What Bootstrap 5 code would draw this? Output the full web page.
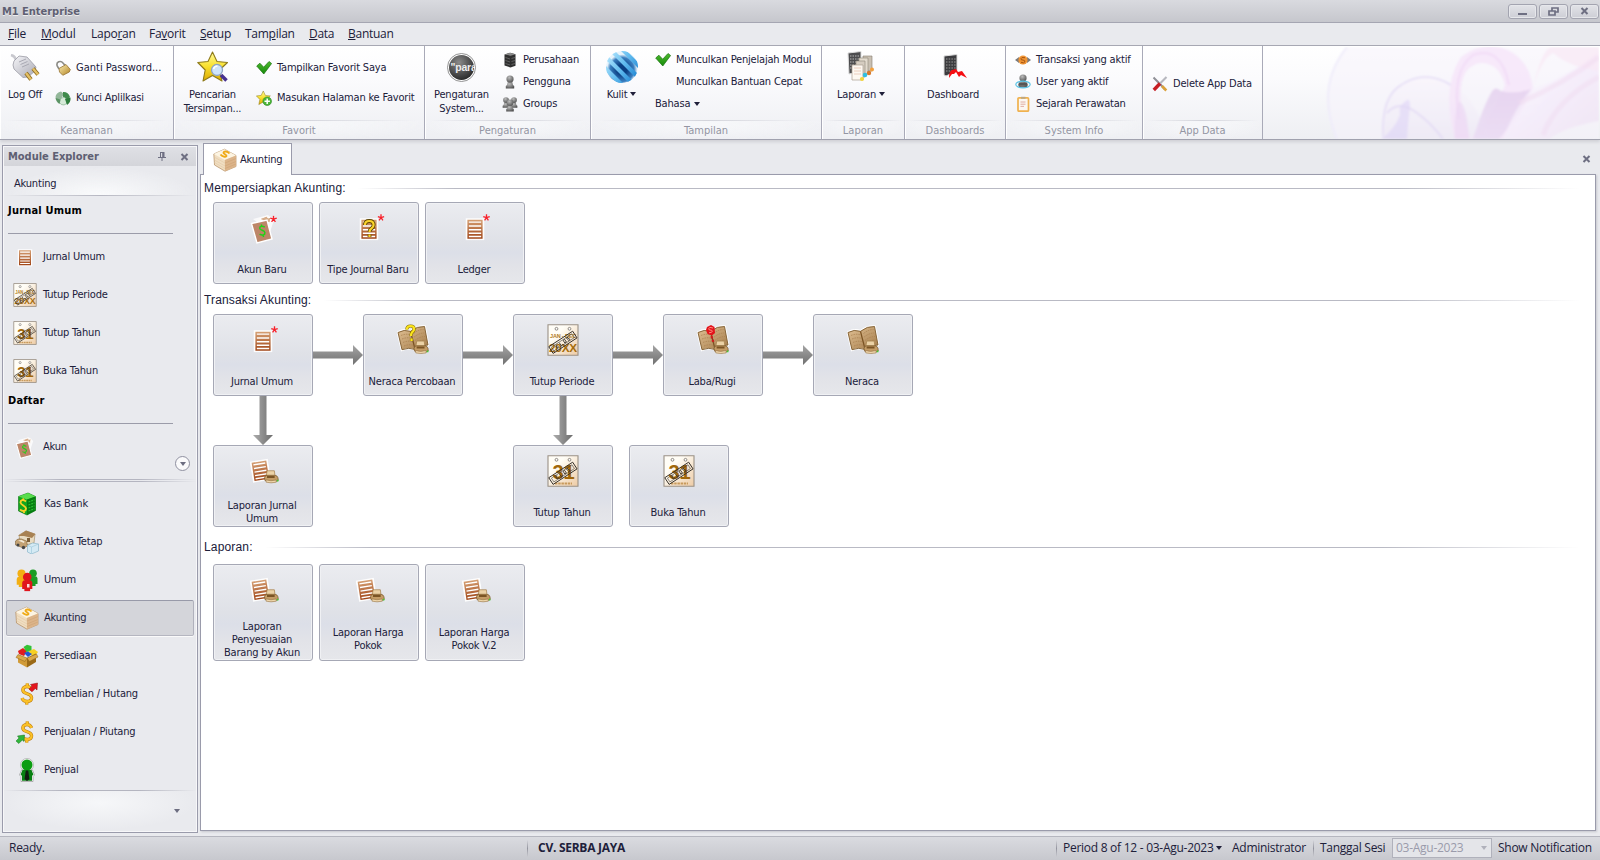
<!DOCTYPE html>
<html lang="id">
<head>
<meta charset="utf-8">
<meta name="viewport" content="width=device-width, initial-scale=1">
<title>M1 Enterprise</title>
<link href="https://cdn.jsdelivr.net/npm/bootstrap@5.3.0/dist/css/bootstrap.min.css" rel="stylesheet">
<style>
body{font-family:"DejaVu Sans Condensed","DejaVu Sans",sans-serif;font-size:11px;line-height:14px;letter-spacing:-.19px;color:#20203a;background:#e9eaee;height:860px;overflow:hidden}
svg{display:block;flex:none}
.segoe{font-family:"Open Sans","Noto Sans",sans-serif;font-size:12px;letter-spacing:-.27px}
/* window frame */
.titlebar{height:23px;padding:0 1px 0 2px;background:linear-gradient(#d9dadf,#c6c7cd);border-bottom:1px solid #a5a6b2}
.titlebar b{font-size:11px;color:#5e5f72;letter-spacing:-.03px;text-shadow:0 1px 0 #eee;padding-top:1px}
.winbtns{gap:2px}
.winbtn{width:29px;height:15px;border:1px solid #a3a4b0;border-radius:3px;background:linear-gradient(#e2e3e8,#cdced5);box-shadow:inset 0 0 0 1px #e6e7eb}
.menubar{height:23px;border-bottom:1px solid #a5a6b2}
.menubar span{flex:none;white-space:nowrap}
/* ribbon */
.ribbon{height:94px;background:linear-gradient(#fff,#fbfbfd 35%,#eeeff3);border-bottom:1px solid #a0a1ae;box-shadow:0 2px 3px #cfd0d6;position:relative}
.rgroup{border-right:1px solid #a9aab8;position:relative;height:93px;flex:none;box-shadow:inset 1px 0 #fff}
.rbody{height:74px}
.rcap{height:19px;line-height:19px;text-align:center;color:#9395a3;letter-spacing:0;border-top:1px solid;border-image:linear-gradient(90deg,transparent 4%,#d3d4db 50%,transparent 96%) 1;background:radial-gradient(ellipse at 50% 20%,#f7f8fa,transparent 75%)}
.rbig{text-align:center;white-space:nowrap;padding-top:5px;flex:none}
.rbig svg{margin:0 auto 5px}
.rbig .caret{margin-left:0}
.rlist{flex:none}
.rlist>div{height:22px;display:flex;align-items:center;white-space:nowrap}
.rlist svg{margin-right:5px}
.rlist.two{padding-top:7px}
.rlist.two>div{height:30px}
.rlist.three{padding-top:3px}
.smoke{position:absolute;right:1px;top:1px}
.caret{display:inline-block;border:3.5px solid transparent;border-top:4px solid #20203a;border-bottom:0;margin-left:4px;vertical-align:2px}
/* module explorer */
.explorer{width:196px;height:688px;margin:5px 0 0 2px;border:1px solid #9a9bab;box-shadow:inset 0 0 0 1px #f7f7f9;flex:none}
.exhead{height:19px;margin:1px;padding:0 7px 0 4px;background:linear-gradient(#dfe0e5,#d4d5da)}
.exhead b{color:#5e5f72;letter-spacing:-.02px;width:150px}
.excat{height:29px;line-height:34px;padding-left:9px;margin:0 2px;background:radial-gradient(ellipse at 50% 100%,#fafbfc,transparent 70%);border-bottom:1px solid;border-image:linear-gradient(90deg,transparent,#b7b8c2 50%,transparent) 1}
.excap{color:#000;font-weight:bold;letter-spacing:.2px;height:38px;line-height:29px;margin-left:5px;width:165px;border-bottom:1px solid #9b9ca9;white-space:nowrap}
.exitem{height:38px;padding-left:10px}
.exitem svg{margin-right:6px}
.fadeline{height:1px;background:linear-gradient(90deg,transparent,#b4b5c0 30%,#b4b5c0 70%,transparent)}
.navitem{height:38px;padding:1px 3px}
.navitem>div{height:36px;width:188px;padding-left:8px;border:1px solid transparent;border-radius:2px}
.navitem>div svg{margin-right:5px}
.navitem .sel{background:#d4d5da;border-color:#989aa9 #b0b1bc #b5b6c0;box-shadow:0 1px #fafafa}
.round{width:15px;height:15px;border-radius:50%;border:1px solid #8f90a0;background:#fafafb}
.round i,.downtri{display:block;width:0;border:3.5px solid transparent;border-top:4px solid #6c6d80;border-bottom:0}
.exfoot{height:39px;background:radial-gradient(ellipse at 50% 30%,#f6f7f9,transparent 70%)}
/* document */
.doc{margin:3px 4px 0 2px;flex:1;min-width:0}
.doctab{width:89px;height:32px;background:#fff;border:1px solid #9a9bab;border-bottom:0;margin-left:3px;padding-left:8px;position:relative;z-index:1;margin-bottom:-1px}
.docpane{height:657px;border:1px solid #9a9bab;background:#fff;box-shadow:1px 1px 2px #c6c7ce;padding:6px 15px 0 12px}
.sect{height:14px;margin-left:-9px;font-family:"Liberation Sans",Arial,sans-serif;font-size:12px;letter-spacing:.16px}
.sect i{flex:1;height:1px;margin-left:12px;background:linear-gradient(90deg,transparent,#b9bac4 8%,#b9bac4 85%,transparent)}
.tile{width:100px;height:82px;flex:none;border:1px solid #a6a8b5;border-radius:3px;background:linear-gradient(#ebecf0,#dfe1e7 50%,#dcdfe8 62%,#e2e3e8 80%,#e6e7eb);box-shadow:inset 0 0 0 1px #f0f1f4;padding-top:9px;text-align:center;line-height:13px}
.tile svg{margin:0 auto}
.tile>div{height:36px;margin:7px 3px 0 1px;display:flex;align-items:center;justify-content:center;white-space:nowrap}
.tile.tall{height:97px}
.tile.tall>div{margin-top:11px;height:44px}
.gap-6{gap:6px}
.sp200{width:200px;flex:none}
.vflow{width:100px;height:49px;flex:none}
/* status */
.statusbar{height:24px;background:linear-gradient(#dadbe0,#c7c8ce);border-top:1px solid #b5b6bf;color:#20203a;padding-bottom:1px}
.sdiv{width:1px;height:17px;background:linear-gradient(transparent,#94959f,transparent);flex:none}
.dated{width:100px;height:20px;border:1px solid #b0b1bb;background:#e4e5e9;color:#9a9bab;padding:0 4px 0 3px}
.dated i{border-top-color:#b0b1bb}
.statusbar span{flex:none;white-space:nowrap}
</style>
</head>
<body>

<svg width="0" height="0" class="position-absolute" aria-hidden="true">
 <defs>
  <linearGradient id="gStar" x1="0" y1="0" x2="0" y2="1"><stop offset="0" stop-color="#fffb9a"/><stop offset=".5" stop-color="#f9e02e"/><stop offset="1" stop-color="#dba900"/></linearGradient>
  <linearGradient id="gBrown" gradientUnits="userSpaceOnUse" x1="0" y1="0" x2="0" y2="23"><stop offset="0" stop-color="#d9a67a"/><stop offset="1" stop-color="#9c3e10"/></linearGradient>
  <linearGradient id="gPlug" x1="0" y1="0" x2="1" y2="1"><stop offset="0" stop-color="#f5f5f8"/><stop offset="1" stop-color="#a9a9b4"/></linearGradient>
  <linearGradient id="gGold" x1="0" y1="0" x2="1" y2="1"><stop offset="0" stop-color="#fbeeb4"/><stop offset="1" stop-color="#b28322"/></linearGradient>
  <linearGradient id="gCheck" x1="0" y1="0" x2="0" y2="1"><stop offset="0" stop-color="#4dbb2c"/><stop offset="1" stop-color="#178a0c"/></linearGradient>
  <radialGradient id="gDark" cx=".4" cy=".3" r=".7"><stop offset="0" stop-color="#8a8a8a"/><stop offset="1" stop-color="#2c2c2c"/></radialGradient>
  <radialGradient id="gGrey" cx=".4" cy=".3" r=".8"><stop offset="0" stop-color="#bcbcbc"/><stop offset="1" stop-color="#484848"/></radialGradient>
  <linearGradient id="gBlue" gradientUnits="userSpaceOnUse" x1="0" y1="6" x2="32" y2="26"><stop offset="0" stop-color="#b4e6fd"/><stop offset=".5" stop-color="#62bcef"/><stop offset="1" stop-color="#1f84d2"/></linearGradient>
  <radialGradient id="gCore" cx=".5" cy=".58" r=".5"><stop offset=".3" stop-color="#0a3f83"/><stop offset=".75" stop-color="#3a7fc0"/><stop offset=".95" stop-color="#e8f4fc"/></radialGradient>
  <linearGradient id="gCal" x1="0" y1="0" x2="1" y2="1"><stop offset=".3" stop-color="#fffdf6"/><stop offset="1" stop-color="#edcba5"/></linearGradient>
  <linearGradient id="gBook" x1="0" y1="0" x2="1" y2="1"><stop offset="0" stop-color="#e2c296"/><stop offset="1" stop-color="#a27a48"/></linearGradient>
  <linearGradient id="gArr" x1="0" y1="0" x2="0" y2="1"><stop offset="0" stop-color="#a5a5a5"/><stop offset="1" stop-color="#707070"/></linearGradient>
  <linearGradient id="gArrV" x1="0" y1="0" x2="1" y2="0"><stop offset="0" stop-color="#acacac"/><stop offset="1" stop-color="#6c6c6c"/></linearGradient>
  <clipPath id="cGlobe"><circle cx="16" cy="16" r="16"/></clipPath>
  <clipPath id="cDark"><circle cx="14.5" cy="14.5" r="12.5"/></clipPath>
 </defs>
</svg>

<svg class="d-none" aria-hidden="true">
 <symbol id="printer" viewBox="0 0 15 14"><path d="M3.5 1.200h7l.6 4.800H2.700z" fill="#ecd2a6" stroke="#a5814c" stroke-width=".7"/><path d="M1 8q0-2.200 2.400-2.400h7.800q2.300.3 2.800 2.400l.3 2.600q-6 3-12.900 0z" fill="#c49c66" stroke="#7b5a2c" stroke-width=".7"/><path d="M3.400 6.200h7.400v2H3.400z" fill="#7a5425"/><path d="M2.300 10q5 1.700 10 .1v2.200q-5 1.200-9.700 0z" fill="#efd6ab" stroke="#8b6a3c" stroke-width=".5"/><path d="M13 10h1.400v1.600H13z" fill="#3fd132"/></symbol>

 <symbol id="listpage" viewBox="0 0 20 23"><path d="M0 0h20v23H0z" fill="#fff" opacity=".9"/><path d="M2 1.500h16v20H2z" fill="url(#gBrown)"/><path d="M3.500 4h13M3.500 8h13M3.500 12h13M3.500 15.800h13M3.500 19.200h13" stroke="#fff" stroke-width="1.500"/></symbol>

 <symbol id="star8" viewBox="0 0 8 8"><path d="M4 .3v3.900M.3 3l3.700 1.200L7.700 3M1.800 7.300L4 4.200l2.200 3.100" fill="none" stroke="#f8202a" stroke-width="1.500"/></symbol>

 <symbol id="i-list" viewBox="0 0 32 32"><use href="#listpage" x="6" y="5" width="20" height="24"/></symbol>
 <symbol id="i-listnew" viewBox="0 0 32 32"><use href="#listpage" x="6.500" y="6" width="19" height="22.500"/><use href="#star8" x="24" y="2" width="7" height="7"/></symbol>
 <symbol id="i-listq" viewBox="0 0 32 32"><use href="#listpage" x="6.500" y="6" width="19" height="22.500"/><path d="M12 13q0-4 4.300-4t4.300 4q0 2-2.300 3.700-1.800 1.200-1.800 3.300M16.500 22.500v2.500" fill="none" stroke="#5d4600" stroke-width="3.800"/><path d="M12 13q0-4 4.300-4t4.300 4q0 2-2.300 3.700-1.800 1.200-1.800 3.300M16.500 22.500v2.500" fill="none" stroke="#fbd32b" stroke-width="2.200"/><use href="#star8" x="24.500" y="2" width="7" height="7"/></symbol>
 <symbol id="i-akun" viewBox="0 0 32 32"><path d="M6 7l15-4 6 5-4 12z" fill="#fff" opacity=".75"/><path d="M12 7l8-3 1 2 3-1-1 6z" fill="#d6ac89" stroke="#fff"/><path d="M4.500 11.500L20 8l5 19-15 4z" fill="#bd8668" stroke="#fff" stroke-width="1.400"/><path d="M17.800 15.200C15.500 13.500 12.500 14 12.700 16.200S17.600 18 17.900 20.500 15 23.800 12.600 22.200M14.300 12.500l.6 2M16 23l.6 2" fill="none" stroke="#25cf18" stroke-width="1.500"/></symbol>
 <symbol id="i-akunnew" viewBox="0 0 32 32"><use href="#i-akun" width="32" height="32"/><use href="#star8" x="23" y="3.500" width="7" height="7"/></symbol>
 <symbol id="i-listprint" viewBox="0 0 32 32"><g transform="rotate(-9 12 15)"><use href="#listpage" x="4" y="4" width="18.500" height="24"/></g><use href="#printer" x="16.500" y="14.500" width="15.500" height="14.500"/></symbol>

 <symbol id="calbase" viewBox="0 0 32 32"><path d="M1 .7h30v30.600H1z" fill="url(#gCal)" stroke="#9a9186" stroke-width="1.100"/><circle cx="9.500" cy="4.800" r="1.400" fill="#fff" stroke="#77716a" stroke-width=".8"/><circle cx="22.500" cy="4.800" r="1.400" fill="#fff" stroke="#77716a" stroke-width=".8"/></symbol>
 <symbol id="stamp" viewBox="0 0 32 32"><g transform="rotate(-33 16 18)" fill="none" stroke="#35302a"><rect x="1.500" y="14.200" width="28.500" height="8" stroke-width=".9"/><rect x="3.500" y="16" width="24.500" height="4.500" stroke-width=".5"/><path d="M10 16.800q-2.500 0-2.500 1.500t2.500 1.500M12.500 16.500v3.500h2M17 16.700h1.800v3.200H17zM23 16.700h-1.800v1.500H23v1.700h-2" stroke-width=".8"/></g></symbol>
 <symbol id="i-period" viewBox="0 0 32 32"><use href="#calbase" width="32" height="32"/><text x="16" y="14" text-anchor="middle" textLength="26" lengthAdjust="spacingAndGlyphs" font-family="Liberation Sans" font-weight="bold" font-size="6" fill="#b27d1c">JAN - DEC</text><text x="16" y="28" text-anchor="middle" textLength="28" lengthAdjust="spacingAndGlyphs" font-family="Liberation Sans" font-weight="bold" font-size="11.500" fill="#a56c0c">20XX</text><use href="#stamp" width="32" height="32"/></symbol>
 <symbol id="i-year" viewBox="0 0 32 32"><use href="#calbase" width="32" height="32"/><text x="16.500" y="23.500" text-anchor="middle" textLength="22" lengthAdjust="spacingAndGlyphs" font-family="Liberation Sans" font-weight="bold" font-size="19.500" fill="#a0670a">31</text><path d="M8 28.500h17" stroke="#c89a5c" stroke-width="2" stroke-dasharray="2.500 .7"/><use href="#stamp" width="32" height="32"/></symbol>

 <symbol id="i-book" viewBox="0 0 32 32"><path d="M1 8.500q6-3.500 12.500-1.200Q20 2 27.500 2.500L31 21q-7 0-13 4.500-6-2.500-13 .2z" fill="#fff" stroke="#fff" stroke-width="2.600"/><path d="M1 8.500q6-3.500 12.500-1.200Q20 2 27.500 2.500L31 21q-7 0-13 4.500-6-2.500-13 .2z" fill="url(#gBook)" stroke="#7d5a2c" stroke-width=".9"/><path d="M13.500 7.300L18 25.200" stroke="#7b5323" stroke-width="1.300"/><path d="M4 11.500q5-2 9-.8M5 15q5-2 9-.8M6 18.500q5-2 9-.8M7 22q5-2 9-.8M16.500 9.500q5-4 10-4M17.200 13q5-4 10-4M18 16.500q5-4 10-4M18.500 20q5-4 10-4" fill="none" stroke="#a98052" stroke-width=".8" stroke-dasharray="1.500 1"/><use href="#printer" x="16" y="15.500" width="16" height="15.500"/></symbol>
 <symbol id="i-bookq" viewBox="0 0 32 32"><use href="#i-book" width="32" height="32"/><path d="M9.800 5.500q.2-3.500 3.800-3.500t3.600 3.200Q17 7 15 8.500q-1.200 1.200-1 3.500M14.500 14.500v2.500" fill="none" stroke="#8a7200" stroke-width="3.200"/><path d="M9.800 5.500q.2-3.500 3.800-3.500t3.600 3.200Q17 7 15 8.500q-1.200 1.200-1 3.500M14.500 14.500v2.500" fill="none" stroke="#fbe41c" stroke-width="2.200"/></symbol>
 <symbol id="i-bookd" viewBox="0 0 32 32"><use href="#i-book" width="32" height="32"/><path d="M10 3l4-2 3.500 2 .5 6-3 2.500L10.500 10 9 6z" fill="#e3131b"/><path d="M16 4q-4-1.500-4.300.5t3 1.800Q17 8 12 8.800" fill="none" stroke="#ff8a7c"/><path d="M14.500 12l.8 3 1.200 3" stroke="#d11d1d" stroke-width="2.200" stroke-dasharray="2.500 1.200"/></symbol>

 <symbol id="i-plug" viewBox="0 0 30 27"><path d="M1 1q4 1 5 5" fill="none" stroke="#c8c8ce" stroke-width="2.500"/><path d="M4 7l5-5 8 1 9 10-1 4-7 6-5 .5L4 15q-2-4 0-8z" fill="url(#gPlug)" stroke="#9a9aa5" stroke-width=".8"/><path d="M9 8l7-3M10.500 10.500l7-3M12 13l7-3" stroke="#a9a9b3" stroke-width="1"/><path d="M16 19l5 6.500M23 14.500l5 6" stroke="#8d6a20" stroke-width="4"/><path d="M16 19l5 6.500M23 14.500l5 6" stroke="#e4c065" stroke-width="2.400"/></symbol>
 <symbol id="i-lock" viewBox="0 0 16 16"><path d="M4 9L2.200 6q-1-3 1.500-4.200 2.600-1 4.300 1.200l2.500 3" fill="none" stroke="#8b8b86" stroke-width="1.600"/><path d="M4 8.500L11 4.500l4.300 5-1 2.500-6.500 3.300L4.500 12z" fill="url(#gGold)" stroke="#957233" stroke-width=".8"/></symbol>
 <symbol id="i-kunci" viewBox="0 0 16 16"><path d="M.5 7Q1 2.500 6 1.500L9 4 6 9l-5 .5z" fill="#93b79a"/><path d="M8 2q5-.5 7 5L12.500 10 8 7z" fill="#3f8b4c"/><path d="M5 9l4-2 4 3.500q-1 4-4 4.500T4 12z" fill="#d5ead8" stroke="#79a883" stroke-width=".6"/><path d="M10 9l5.500-1.500q.5 5-3.500 7.500z" fill="#2d7c3c"/><path d="M.6 8q.5 4 4 6l1-4.500z" fill="#5c9465"/></symbol>
 <symbol id="starshape" viewBox="0 0 32 32"><path d="M15.500 1l4.500 9.500 10.500 1-8 7.500 2.500 11-9.500-5.500L6 30l2.200-11L.8 11.500 11 10.500z" fill="url(#gStar)" stroke="#8e7a1a" stroke-width="1.100" stroke-linejoin="round"/></symbol>
 <symbol id="i-starfind" viewBox="0 0 32 32"><use href="#starshape" width="32" height="32"/><path d="M24 24l5.500 5.500" stroke="#473190" stroke-width="3.600"/><circle cx="20" cy="19" r="5.500" fill="#cfe5fb" stroke="#8da4c4" stroke-width="1.300"/><path d="M16.500 18q1-3 4-3" stroke="#fff" stroke-width="1.600" fill="none"/></symbol>
 <symbol id="i-check" viewBox="0 0 16 16"><path d="M.7 6l3.200-2.800 3.800 4L13 1.500l2.600 2L7.800 14z" fill="url(#gCheck)" stroke="#16700d" stroke-width=".7"/></symbol>
 <symbol id="i-staradd" viewBox="0 0 16 16"><use href="#starshape" width="15" height="16"/><circle cx="11.200" cy="11.200" r="4.300" fill="#4cb53a" stroke="#2d8a22" stroke-width=".6"/><path d="M11.200 8.500v5.400M8.500 11.200h5.400" stroke="#fff" stroke-width="1.500"/></symbol>
 <symbol id="i-para" viewBox="0 0 29 29"><circle cx="14.500" cy="14.500" r="14" fill="#fff" stroke="#777" stroke-width=".8"/><circle cx="14.500" cy="14.500" r="12.500" fill="url(#gDark)"/><g clip-path="url(#cDark)"><text x="3.500" y="17.800" textLength="26" lengthAdjust="spacingAndGlyphs" font-family="Liberation Sans" font-weight="bold" font-size="10" fill="#eee">"para</text></g></symbol>
 <symbol id="i-server" viewBox="0 0 16 16"><path d="M2.500 2.500L8 .8l5.500 1.500v11.500L8.500 15.500l-6-2z" fill="#2f2f2f"/><path d="M2.500 2.500L8 .8l5.500 1.500-5 1.400z" fill="#8a8a8a"/><path d="M3.500 5.500l4.500 1.500M3.500 8.500L8 10M3.500 11.500L8 13M9.500 6.500l3.500-1M9.500 9.500l3.500-1M9.500 12.500l3.500-1" stroke="#6d6d6d" stroke-width=".8"/></symbol>
 <symbol id="pawn" viewBox="0 0 10 14"><path d="M2.700 7h4.600l.7 3 1.200 1v2.600H.8V11L2 10z" fill="url(#gGrey)"/><circle cx="5" cy="4" r="3.600" fill="url(#gGrey)"/></symbol>
 <symbol id="i-user" viewBox="0 0 16 16"><use href="#pawn" x="3" y="1" width="10" height="14"/></symbol>
 <symbol id="i-group" viewBox="0 0 16 16"><use href="#pawn" x="0" y="0" width="8" height="13"/><use href="#pawn" x="8" y="0" width="8" height="13"/><use href="#pawn" x="3.500" y="3" width="9" height="13"/></symbol>
 <symbol id="i-globe" viewBox="0 0 32 32"><g clip-path="url(#cGlobe)"><circle cx="16" cy="16" r="16" fill="url(#gCore)"/><path d="M-10 8L24 42M-6 0L36 42M-3-9L41 35M6-12L44 26M14-16L48 18" stroke="url(#gBlue)" stroke-width="4.200"/></g></symbol>
 <symbol id="i-sheets" viewBox="0 0 28 31"><path d="M1 2l13-1.500v20L2 23z" fill="#4c4c4e" stroke="#ddd"/><path d="M3 5h10M3 8h10M3 11h10M3 14h10M3 17h8" stroke="#b5b5b5" stroke-width="1.200" stroke-dasharray="1.500 1"/><path d="M16 5h9v15h-9z" fill="#c9c0b3" stroke="#877e70" stroke-width=".6"/><path d="M12 7h9v16h-9z" fill="#e2dace" stroke="#8f8678" stroke-width=".6"/><path d="M9 10h9v16H9z" fill="#d5ccc0" stroke="#8f8678" stroke-width=".6"/><path d="M5 14h11v15H5z" fill="#fdf8f1" stroke="#aa9f90" stroke-width=".7"/><path d="M7 17h7M7 20h7M7 23h7" stroke="#e6c3b2" stroke-width=".8"/><circle cx="25" cy="18.500" r="2" fill="#f3a03c"/><circle cx="22" cy="22" r="2.200" fill="#d87a2c"/><circle cx="18" cy="24" r="2.300" fill="#32bfe0"/><circle cx="15" cy="28" r="2.100" fill="#f6d63a"/></symbol>
 <symbol id="i-dash" viewBox="0 0 28 31"><path d="M5 5l13-1.500V20L7 25 5 24z" fill="#3c3c3f" stroke="#ddd"/><path d="M7 8h10M7 11h10M7 14h10M7 17h10M7 20h7" stroke="#999" stroke-width="1.200" stroke-dasharray="1.500 1.200"/><path d="M10 27q0-7 3-8l4-1 2 3 4-1 5 7-6-3-2 2-3-5-2 2-2 0z" fill="#f50d12"/></symbol>
 <symbol id="i-trans" viewBox="0 0 16 16"><path d="M0 8l4-3v2h8V5l4 3-4 3V9H4v2z" fill="#7a7a7c"/><circle cx="8" cy="8" r="4.600" fill="#ef9434"/><path d="M10 5.700q-4-.8-4 1t2 1.300q2.500.5 1.800 2T6 10.300" fill="none" stroke="#a85510" stroke-width="1"/></symbol>
 <symbol id="i-useron" viewBox="0 0 16 16"><use href="#pawn" x="3" y="0" width="10" height="14"/><ellipse cx="8" cy="10.500" rx="7.200" ry="3.300" fill="none" stroke="#5cc4e6" stroke-width="1.200"/><path d="M4 8.500h8l1 3H3z" fill="#555"/></symbol>
 <symbol id="i-clip" viewBox="0 0 16 16"><rect x="3" y="1.800" width="10.500" height="13.400" rx="1" fill="#fcf7f0" stroke="#efb14e" stroke-width="1.700"/><path d="M6 .8h4.500v2H6z" fill="#bfa880"/><path d="M5.500 6h5M5.500 8.200h5M5.500 10.400h3.500" stroke="#dda59a" stroke-width=".9"/></symbol>
 <symbol id="i-tools" viewBox="0 0 16 16"><path d="M1.500 1.500L9 9l4 4.500" stroke="#8f9097" stroke-width="2"/><path d="M14.500 1L8 7.500" stroke="#b7b8bf" stroke-width="2.200"/><path d="M8 7.500L1.800 14" stroke="#c61e24" stroke-width="3.400"/><path d="M10 10l4.300 4.500" stroke="#dba13a" stroke-width="2.600"/></symbol>

 <symbol id="i-akunting" viewBox="0 0 24 24"><path d="M.8 6L11.500 1.200 23 7.500v11L12 23.200 1.500 17z" fill="#f0dec2" stroke="#b18a5d" stroke-width=".7"/><path d="M.8 6L11.500 1.200 23 7.500 11.800 12z" fill="#fcf4e2"/><path d="M11.800 12L23 7.500v11L12 23.200z" fill="#dcb48a"/><path d="M1.200 9l10.700 6M1.300 12L12 18M1.400 14.500L12 20.500" stroke="#e2c8a3" stroke-width=".6"/><path d="M12 15l11-4.500M12 18l11-4.500M12 20.500l11-4.500" stroke="#cca273" stroke-width=".6"/><path d="M16.500 5.500C14.500 3 11 3 10.500 4.500S14 6.500 13.500 8 9 8.500 7.500 6.500" fill="none" stroke="#efaa18" stroke-width="1.900"/></symbol>
 <symbol id="i-kas" viewBox="0 0 24 24"><path d="M3.500 4.500L13 1l7.500 3.500v14L12 23l-8.500-4z" fill="#12a71e" stroke="#0a6d10" stroke-width=".6"/><path d="M3.500 4.500L13 1l7.500 3.500L12 7.500z" fill="#58dd4c"/><path d="M12 7.500l8.500-3v14L12 23z" fill="#067d11"/><path d="M13.500 10l6-2.200M13.500 13l6-2.200M13.500 16l6-2.200M13.500 19l6-2.200" stroke="#2bbf33" stroke-width="1.200" stroke-dasharray="2 .8"/><path d="M11 9.500C8 7 5.500 8 5.500 10.500S11 14 11 16.500 8 20 5 17.500M7.700 6.500l1 2M8.700 18.500l.5 2.500" fill="none" stroke="#f9cf26" stroke-width="1.900"/></symbol>
 <symbol id="i-aktiva" viewBox="0 0 24 24"><path d="M4 5l7-4 9 3-1 9-8 2-6-3z" fill="#e9dcc2" stroke="#8f7347" stroke-width=".5"/><path d="M3 6l8-5.500L20.500 4 17 8 9 6z" fill="#a88253"/><path d="M12 8h3v4h-3z" fill="#7d5f37"/><path d="M.5 11q2-3 6-2l5 2 1 5-4 2-8-3z" fill="#c3a274" stroke="#6d5128" stroke-width=".5"/><path d="M3 10.500l3.500-.5 3 1.500-.5 1.500z" fill="#f3ead7"/><circle cx="3" cy="15" r="1.500" fill="#444"/><circle cx="8.500" cy="17.500" r="1.700" fill="#444"/><path d="M12.500 15.500l5-2.500 6 1v7l-7 3-4-2z" fill="#d5eaf4" stroke="#8cb7cc" stroke-width=".7"/><path d="M16.500 17l7-3M16.500 17v7M16.500 17l-4-1.500" stroke="#a3cbdd" stroke-width=".7"/></symbol>
 <symbol id="man" viewBox="0 0 12 20"><path d="M.7 11Q1 8.500 3.500 8.500h5q2.500 0 2.800 2.500v6.500H9V20H3v-2.500H.7z"/><circle cx="6" cy="5" r="4.500"/></symbol>
 <symbol id="i-umum" viewBox="0 0 24 24"><use href="#man" x="1" y="1" width="11" height="18" fill="#f3af12"/><use href="#man" x="12.500" y="1" width="11" height="17" fill="#1b9c24"/><use href="#man" x="6.500" y="4" width="11.500" height="19.500" fill="#e0151c"/><path d="M12 16h2.500v3.500H12z" fill="#fbd9d9"/></symbol>
 <symbol id="i-sedia" viewBox="0 0 24 24"><path d="M3 7l5-3 4 3-3 5-5-2z" fill="#e21c1c"/><path d="M8.500 3L12 .7 16.500 2v5l-5 1z" fill="#33c235"/><path d="M14 7l5-2 4 3-3 4-5-1z" fill="#f7d024"/><path d="M9 9l4-1.500L17 10l-4 3z" fill="#2355d3"/><path d="M3 11l9 3.500v9l-9-5z" fill="#d19b38"/><path d="M12 14l9-4.500v8.500l-9 5.500z" fill="#9b6a17"/><path d="M3 10.500l9 3.500-2 3.500-9-4zM21.500 10L12 14l2.500 3.500 8.500-4.500z" fill="#dba94a" stroke="#8c6018" stroke-width=".5"/></symbol>
 <symbol id="dollar" viewBox="0 0 14 24"><g fill="none"><path d="M12 7.500C11 5 9.500 4 7 4 4 4 2.500 5.500 2.500 7.700 2.500 13 12 10.500 12 16c0 2.500-2 4-5 4-2.500 0-4.500-1-5.500-3.500M7.300 .5v3.500M6.700 20v3.500" stroke="#b9780c" stroke-width="3.600"/><path d="M12 7.500C11 5 9.500 4 7 4 4 4 2.500 5.500 2.500 7.700 2.500 13 12 10.500 12 16c0 2.500-2 4-5 4-2.500 0-4.500-1-5.500-3.500M7.300 .5v3.500M6.700 20v3.500" stroke="#fbc127" stroke-width="2.500"/></g></symbol>
 <symbol id="i-beli" viewBox="0 0 24 24"><use href="#dollar" x="5" y="1" width="14" height="22"/><path d="M14 7l3-3-1.500-1.500L22.500 1 22 8l-1.700-1.500-3.300 3.300z" fill="#e4151d" stroke="#8f0a0f" stroke-width=".5"/></symbol>
 <symbol id="i-jual" viewBox="0 0 24 24"><use href="#dollar" x="5" y="1" width="14" height="22"/><path d="M1 21l3-3-1.500-2L9.500 15 9 21.500 7.300 20l-3.500 3.500z" fill="#30b63b" stroke="#12711a" stroke-width=".5"/></symbol>
 <symbol id="i-sales" viewBox="0 0 24 24"><circle cx="12" cy="7" r="6.500" fill="#fff" stroke="#999" stroke-width=".6"/><path d="M6.500 12h11l2 5-1.500 1.500V23.500H6V18.500L4.500 17z" fill="#fff" stroke="#888" stroke-width=".6"/><circle cx="12" cy="7" r="5.500" fill="#0c9d12"/><path d="M7.500 12h9l1.900 4.500-1.400 1.500V22.700H7V18l-1.400-1.500z" fill="#087f12"/><path d="M10.800 12.500h2.400l1.200 8.500-2.400 2-2.400-2z" fill="#101b10"/></symbol>

 <symbol id="i-x" viewBox="0 0 9 8"><path d="M1.500 1l6 6M7.500 1l-6 6" stroke="#6e6f82" stroke-width="2"/></symbol>
 <symbol id="arrow-r" viewBox="0 0 50 20"><path d="M0 6.500h40V0l10 10-10 10v-6.500H0z" fill="url(#gArr)"/></symbol>
 <symbol id="arrow-d" viewBox="0 0 20 49"><path d="M6.500 0v39H0l10 10 10-10h-6.500V0z" fill="url(#gArrV)"/></symbol>
</svg>

<header class="titlebar d-flex align-items-center">
 <b class="me-auto">M1 Enterprise</b>
 <div class="winbtns d-flex align-items-center">
  <div class="winbtn d-flex align-items-end justify-content-center"><svg width="9" height="6" viewBox="0 0 9 6"><path d="M0 1h9v2H0z" fill="#6e6f82"/></svg></div>
  <div class="winbtn d-flex align-items-center justify-content-center"><svg width="11" height="9" viewBox="0 0 11 9"><path d="M4 1h6v4H4z" fill="none" stroke="#6e6f82" stroke-width="1.700"/><path d="M1 4h6v4H1z" fill="#d6d7dc" stroke="#6e6f82" stroke-width="1.700"/></svg></div>
  <div class="winbtn d-flex align-items-center justify-content-center"><svg width="9" height="8"><use href="#i-x"/></svg></div>
 </div>
</header>

<nav class="menubar segoe d-flex align-items-center ps-2">
 <span style="width:33px"><u>F</u>ile</span><span style="width:50px"><u>M</u>odul</span><span style="width:58px">Lapo<u>r</u>an</span><span style="width:51px">Fa<u>v</u>orit</span><span style="width:45px"><u>S</u>etup</span><span style="width:64px">Tam<u>p</u>ilan</span><span style="width:39px"><u>D</u>ata</span><span><u>B</u>antuan</span>
</nav>

<section class="ribbon d-flex">
 <svg class="smoke" width="280" height="92" viewBox="0 0 280 92">
  <defs>
   <linearGradient id="sm1" x1="0" y1="0" x2="1" y2="1"><stop offset="0" stop-color="#fff" stop-opacity="0"/><stop offset=".5" stop-color="#f5edfb"/><stop offset="1" stop-color="#efe3f3"/></linearGradient>
   <linearGradient id="sm2" x1="0" y1="0" x2="0" y2="1"><stop offset="0" stop-color="#fbf6fd"/><stop offset="1" stop-color="#ebe5f4"/></linearGradient>
   <linearGradient id="sm3" x1="0" y1="0" x2="0" y2="1"><stop offset="0" stop-color="#e5d1ef"/><stop offset="1" stop-color="#eadcf3"/></linearGradient>
   <filter id="soft" x="-5%" y="-5%" width="110%" height="110%"><feGaussianBlur stdDeviation="1.300"/></filter>
  </defs>
  <g filter="url(#soft)">
  <path d="M28 0Q-4 40 18 92h262V0z" fill="#f5f2fc" opacity=".55"/>
  <path d="M28 0Q-4 40 18 92" fill="none" stroke="#efecfa" stroke-width="2"/>
  <path d="M66 92Q58 60 80 40q20-18 48-4 28 10 40 56z" fill="url(#sm2)" opacity=".5"/>
  <path d="M64 90Q62 50 82 38q24-16 50 0" fill="none" stroke="#e4dcf5" stroke-width="1.500"/>
  <path d="M62 92q14-10 19-24-2-10 6-14 4-4 4 6-2 14-3 32z" fill="#ddd3f6" opacity=".6"/>
  <path d="M68 66q12-14 30 0 14 10 26 26" fill="none" stroke="#e0d6f4" stroke-width="2" opacity=".7"/>
  <path fill-rule="evenodd" d="M136 92Q122 40 142 10q26-20 52-4 18 12 20 36-8 24-30 50zM152 92Q180 56 186 38q-6-22-24-22-18 2-20 26-2 24 10 50z" fill="#f5e4f8" opacity=".75"/>
  <path d="M140 72Q132 24 154 8q28-10 36 30" fill="none" stroke="#efd6f5" stroke-width="2" opacity=".7"/>
  <path d="M136 92q-2-24 4-38 8 4 10 38z" fill="#ecd9f3" opacity=".7"/>
  <path d="M154 92q10-32 18-46 4-8 10-2 14 4 30-2-8 22-32 50z" fill="url(#sm3)" opacity=".85"/>
  <path d="M184 92q12-32 28-50Q250 30 280 4v70q-34 6-50 18z" fill="url(#sm1)" opacity=".85"/>
  <path d="M214 42Q222 4 232 0h48v24q-30-4-46-18-12 6-20 36z" fill="#fae8f5" opacity=".7"/>
  <path d="M224 88q14-36 56-58M200 56q46-20 80-46" fill="none" stroke="#f0dcf1" stroke-width="5" opacity=".55"/>
  </g>
 </svg>

 <div class="rgroup" style="width:174px">
  <div class="rbody d-flex">
   <div class="rbig" style="width:50px"><svg width="30" height="27" style="margin-top:3px;margin-bottom:7px"><use href="#i-plug"/></svg>Log Off</div>
   <div class="rlist two" style="padding-left:5px"><div><svg width="16" height="16"><use href="#i-lock"/></svg><span style="letter-spacing:0">Ganti Password...</span></div><div><svg width="16" height="16"><use href="#i-kunci"/></svg>Kunci Aplilkasi</div></div>
  </div><div class="rcap">Keamanan</div>
 </div>
 <div class="rgroup" style="width:251px">
  <div class="rbody d-flex">
   <div class="rbig" style="width:77px"><svg width="32" height="32"><use href="#i-starfind"/></svg>Pencarian<br>Tersimpan...</div>
   <div class="rlist two" style="padding-left:5px"><div><svg width="16" height="16"><use href="#i-check"/></svg>Tampilkan Favorit Saya</div><div><svg width="16" height="16"><use href="#i-staradd"/></svg>Masukan Halaman ke Favorit</div></div>
  </div><div class="rcap">Favorit</div>
 </div>
 <div class="rgroup" style="width:166px">
  <div class="rbody d-flex">
   <div class="rbig" style="width:73px"><svg width="29" height="29" style="margin-top:2px;margin-bottom:6px"><use href="#i-para"/></svg>Pengaturan<br>System...</div>
   <div class="rlist three" style="padding-left:4px"><div><svg width="16" height="16"><use href="#i-server"/></svg>Perusahaan</div><div><svg width="16" height="16"><use href="#i-user"/></svg>Pengguna</div><div><svg width="16" height="16"><use href="#i-group"/></svg>Groups</div></div>
  </div><div class="rcap">Pengaturan</div>
 </div>
 <div class="rgroup" style="width:231px">
  <div class="rbody d-flex">
   <div class="rbig" style="width:61px"><svg width="32" height="32"><use href="#i-globe"/></svg>Kulit <i class="caret"></i></div>
   <div class="rlist three" style="padding-left:3px"><div><svg width="16" height="16"><use href="#i-check"/></svg>Munculkan Penjelajah Modul</div><div style="padding-left:21px">Munculkan Bantuan Cepat</div><div>Bahasa <i class="caret"></i></div></div>
  </div><div class="rcap">Tampilan</div>
 </div>
 <div class="rgroup" style="width:83px">
  <div class="rbody"><div class="rbig pe-1"><svg width="28" height="31" style="margin-bottom:6px"><use href="#i-sheets"/></svg>Laporan <i class="caret"></i></div></div><div class="rcap">Laporan</div>
 </div>
 <div class="rgroup" style="width:101px">
  <div class="rbody"><div class="rbig pe-1"><svg width="28" height="31" style="margin-bottom:6px"><use href="#i-dash"/></svg>Dashboard</div></div><div class="rcap">Dashboards</div>
 </div>
 <div class="rgroup" style="width:137px">
  <div class="rbody"><div class="rlist three" style="padding-left:9px"><div><svg width="16" height="16"><use href="#i-trans"/></svg>Transaksi yang aktif</div><div><svg width="16" height="16"><use href="#i-useron"/></svg>User yang aktif</div><div><svg width="16" height="16"><use href="#i-clip"/></svg>Sejarah Perawatan</div></div></div><div class="rcap">System Info</div>
 </div>
 <div class="rgroup" style="width:120px">
  <div class="rbody d-flex align-items-center"><div class="rlist" style="padding:2px 0 0 9px"><div><svg width="16" height="16"><use href="#i-tools"/></svg>Delete App Data</div></div></div><div class="rcap">App Data</div>
 </div>
</section>

<main class="d-flex" style="height:696px">
 <aside class="explorer">
  <div class="exhead d-flex align-items-center"><b>Module Explorer</b>
   <svg width="8" height="9" viewBox="0 0 8 9" class="me-auto"><path d="M2 0h4.500v5H8v1H0V5h2zM3.500 6h1v3h-1z" fill="#6e6f82"/><path d="M3 1h1.200v4H3z" fill="#dadbe0"/></svg>
   <svg width="9" height="8"><use href="#i-x"/></svg></div>
  <div class="excat">Akunting</div>
  <div class="excap">Jurnal Umum</div>
  <div style="height:4px"></div>
  <div class="exitem d-flex align-items-center"><svg width="24" height="24"><use href="#i-list"/></svg>Jurnal Umum</div>
  <div class="exitem d-flex align-items-center"><svg width="24" height="24"><use href="#i-period"/></svg>Tutup Periode</div>
  <div class="exitem d-flex align-items-center"><svg width="24" height="24"><use href="#i-year"/></svg>Tutup Tahun</div>
  <div class="exitem d-flex align-items-center"><svg width="24" height="24"><use href="#i-year"/></svg>Buka Tahun</div>
  <div class="excap" style="height:34px;line-height:22px">Daftar</div>
  <div style="height:4px"></div>
  <div class="exitem d-flex align-items-center"><svg width="24" height="24"><use href="#i-akun"/></svg>Akun</div>
  <div class="d-flex justify-content-end" style="height:15px;padding-right:7px;margin-top:-10px"><span class="round d-flex align-items-center justify-content-center"><i></i></span></div>
  <div style="height:8px"></div>
  <div class="fadeline"></div><div style="height:1px"></div><div class="fadeline"></div>
  <div style="height:3px"></div>
  <div class="navitem"><div class="d-flex align-items-center"><svg width="24" height="24"><use href="#i-kas"/></svg>Kas Bank</div></div>
  <div class="navitem"><div class="d-flex align-items-center"><svg width="24" height="24"><use href="#i-aktiva"/></svg>Aktiva Tetap</div></div>
  <div class="navitem"><div class="d-flex align-items-center"><svg width="24" height="24"><use href="#i-umum"/></svg>Umum</div></div>
  <div class="navitem"><div class="sel d-flex align-items-center"><svg width="24" height="24"><use href="#i-akunting"/></svg>Akunting</div></div>
  <div class="navitem"><div class="d-flex align-items-center"><svg width="24" height="24"><use href="#i-sedia"/></svg>Persediaan</div></div>
  <div class="navitem"><div class="d-flex align-items-center"><svg width="24" height="24"><use href="#i-beli"/></svg>Pembelian / Hutang</div></div>
  <div class="navitem"><div class="d-flex align-items-center"><svg width="24" height="24"><use href="#i-jual"/></svg>Penjualan / Piutang</div></div>
  <div class="navitem"><div class="d-flex align-items-center"><svg width="24" height="24"><use href="#i-sales"/></svg>Penjual</div></div>
  <div style="height:1px"></div>
  <div class="fadeline"></div>
  <div class="exfoot d-flex justify-content-end align-items-center"><i class="downtri" style="margin-right:17px"></i></div>
 </aside>

 <div class="doc">
  <div class="d-flex align-items-start">
   <div class="doctab d-flex align-items-center"><svg width="24" height="24" style="margin:0 3px 0 1px"><use href="#i-akunting"/></svg>Akunting</div>
   <svg width="9" height="8" class="ms-auto" style="margin:12px 5px 0 0"><use href="#i-x"/></svg>
  </div>
  <div class="docpane">
   <div class="sect d-flex align-items-center">Mempersiapkan Akunting:<i></i></div>
   <div class="d-flex gap-6" style="margin-top:7px">
    <div class="tile"><svg width="32" height="32"><use href="#i-akunnew"/></svg><div>Akun Baru</div></div>
    <div class="tile"><svg width="32" height="32"><use href="#i-listq"/></svg><div>Tipe Journal Baru</div></div>
    <div class="tile"><svg width="32" height="32"><use href="#i-listnew"/></svg><div>Ledger</div></div>
   </div>
   <div class="sect d-flex align-items-center" style="margin-top:9px">Transaksi Akunting:<i></i></div>
   <div class="d-flex align-items-center" style="margin-top:7px">
    <div class="tile"><svg width="32" height="32"><use href="#i-listnew"/></svg><div>Jurnal Umum</div></div>
    <svg width="50" height="20"><use href="#arrow-r"/></svg>
    <div class="tile"><svg width="32" height="32"><use href="#i-bookq"/></svg><div>Neraca Percobaan</div></div>
    <svg width="50" height="20"><use href="#arrow-r"/></svg>
    <div class="tile"><svg width="32" height="32"><use href="#i-period"/></svg><div>Tutup Periode</div></div>
    <svg width="50" height="20"><use href="#arrow-r"/></svg>
    <div class="tile"><svg width="32" height="32"><use href="#i-bookd"/></svg><div>Laba/Rugi</div></div>
    <svg width="50" height="20"><use href="#arrow-r"/></svg>
    <div class="tile"><svg width="32" height="32"><use href="#i-book"/></svg><div>Neraca</div></div>
   </div>
   <div class="d-flex">
    <div class="vflow d-flex justify-content-center"><svg width="20" height="49"><use href="#arrow-d"/></svg></div>
    <div class="sp200"></div>
    <div class="vflow d-flex justify-content-center"><svg width="20" height="49"><use href="#arrow-d"/></svg></div>
   </div>
   <div class="d-flex">
    <div class="tile"><svg width="32" height="32"><use href="#i-listprint"/></svg><div>Laporan Jurnal<br>Umum</div></div>
    <div class="sp200"></div>
    <div class="tile me-3"><svg width="32" height="32"><use href="#i-year"/></svg><div>Tutup Tahun</div></div>
    <div class="tile"><svg width="32" height="32"><use href="#i-year"/></svg><div>Buka Tahun</div></div>
   </div>
   <div class="sect d-flex align-items-center" style="margin-top:13px">Laporan:<i></i></div>
   <div class="d-flex gap-6" style="margin-top:10px">
    <div class="tile tall"><svg width="32" height="32"><use href="#i-listprint"/></svg><div>Laporan<br>Penyesuaian<br>Barang by Akun</div></div>
    <div class="tile tall"><svg width="32" height="32"><use href="#i-listprint"/></svg><div>Laporan Harga<br>Pokok</div></div>
    <div class="tile tall"><svg width="32" height="32"><use href="#i-listprint"/></svg><div>Laporan Harga<br>Pokok V.2</div></div>
   </div>
  </div>
 </div>
</main>

<footer class="statusbar segoe d-flex align-items-center">
 <span style="width:527px;padding-left:9px">Ready.</span><i class="sdiv"></i>
 <b class="me-auto" style="padding-left:10px">CV. SERBA JAYA</b>
 <i class="sdiv"></i><span style="width:175px;padding-left:6px">Period 8 of 12 - 03-Agu-2023<i class="caret" style="margin-left:2px"></i></span>
 <span style="width:81px">Administrator</span><i class="sdiv"></i><span style="width:78px;padding-left:6px">Tanggal Sesi</span>
 <div class="dated d-flex align-items-center justify-content-between">03-Agu-2023<i class="downtri"></i></div>
 <span style="width:108px;padding-left:6px">Show Notification</span>
</footer>
<script src="https://cdn.jsdelivr.net/npm/bootstrap@5.3.0/dist/js/bootstrap.bundle.min.js"></script>
</body>
</html>
